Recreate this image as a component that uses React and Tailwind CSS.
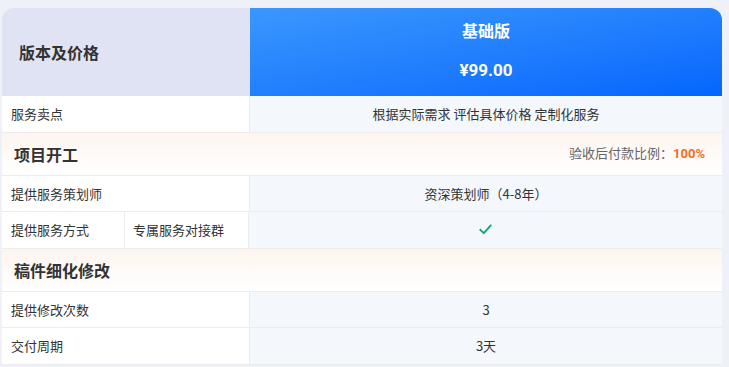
import React from 'react';

const font = { fontFamily: '"Noto Sans CJK SC", "Noto Sans", sans-serif' };

function Check() {
  return (
    <svg width="13" height="11" viewBox="0 0 14 12" fill="none">
      <path d="M1.5 6.5 L5.2 10 L12.5 1.8" stroke="#17a876" strokeWidth="2.2" strokeLinecap="square" />
    </svg>
  );
}

function Row({ label, sub, children }) {
  return (
    <div className="flex h-[36.5px] border-b border-[#ececec]">
      {sub ? (
        <>
          <div className="w-[123px] flex items-center pl-[9px] bg-white border-r border-[#ececec]">{label}</div>
          <div className="w-[124px] flex items-center pl-[8px] bg-white border-r border-[#ececec]">{sub}</div>
        </>
      ) : (
        <div className="w-[248px] flex items-center pl-[9px] bg-white border-r border-[#ececec]">{label}</div>
      )}
      <div className="flex-1 flex items-center justify-center bg-[#f4f8fd]">{children}</div>
    </div>
  );
}

function Section({ title, right }) {
  return (
    <div className="flex items-center justify-between h-[43px] px-[12px] bg-gradient-to-b from-[#fdf5ef] to-white border-b border-[#ececec]">
      <span className="text-[16px] font-bold text-[#333]">{title}</span>
      {right}
    </div>
  );
}

export default function App() {
  return (
    <div className="w-[729px] h-[367px] bg-[#eef1f7] pt-2 pl-[2px] overflow-hidden" style={font}>
      <div className="w-[720px] rounded-t-[12px] overflow-hidden text-[13px] text-[#333]">
        {/* Header */}
        <div className="flex h-[88px]">
          <div className="w-[248px] bg-[#dfe3f4] flex items-center pl-[17px]">
            <span className="text-[16px] font-bold text-[#333]">版本及价格</span>
          </div>
          <div className="flex-1 bg-gradient-to-br from-[#3b97fd] to-[#0465fd] flex flex-col items-center text-white">
            <span className="mt-[11px] text-[16px] leading-[22px] font-bold">基础版</span>
            <span className="mt-[18px] text-[17px] leading-[22px] font-bold" style={{ fontFamily: 'Roboto, "Noto Sans", sans-serif' }}>¥99.00</span>
          </div>
        </div>

        <Row label="服务卖点">根据实际需求 评估具体价格 定制化服务</Row>

        <Section
          title="项目开工"
          right={
            <span className="text-[13px] text-[#666] pr-[5px]">
              验收后付款比例：<span className="font-bold text-[#f26c22]" style={{ fontFamily: 'Roboto, sans-serif' }}>100%</span>
            </span>
          }
        />
        <Row label="提供服务策划师">资深策划师（4-8年）</Row>
        <Row label="提供服务方式" sub="专属服务对接群"><Check /></Row>

        <Section title="稿件细化修改" />
        <Row label="提供修改次数">3</Row>
        <Row label="交付周期">3天</Row>
      </div>
    </div>
  );
}
